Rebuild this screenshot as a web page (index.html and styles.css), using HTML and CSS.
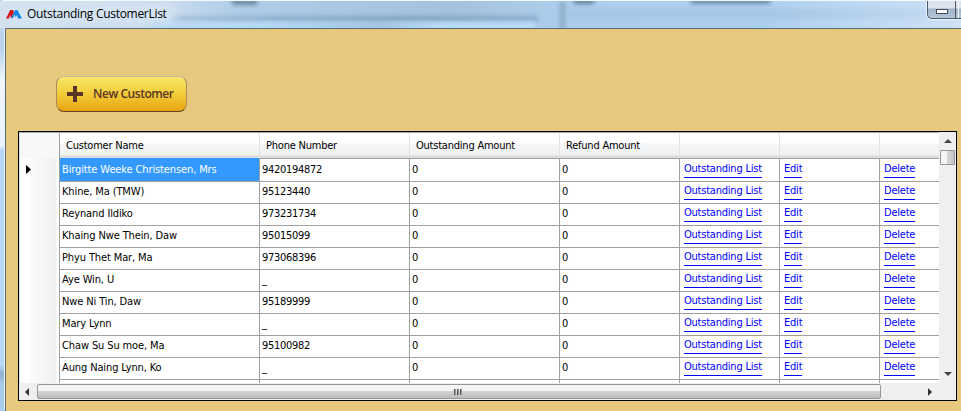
FILE: index.html
```
<!DOCTYPE html>
<html lang="en">
<head>
<meta charset="utf-8">
<title>Outstanding CustomerList</title>
<link rel="stylesheet" href="styles.css">
</head>
<body>
<div class="window">
  <header class="titlebar">
    <div class="glass">
      <i class="g g1"></i><i class="g g2"></i><i class="g g3"></i><i class="g g4"></i><i class="g g5"></i><i class="g g6"></i><i class="g g7"></i><i class="g g8"></i>
    </div>
    <svg class="logo" width="16" height="10" viewBox="0 0 16 10"><path d="M0 9.5 4.2 1H7L8 3.2 5 9.5 4 6 3 9.5z" fill="#d8101c"/><path d="M5 9.5 9 1h2.4L16 9.5h-4L11 6 9.7 8.5 8.8 5.5 7 9z" fill="#1287e8"/></svg>
    <span class="title">Outstanding CustomerList</span>
    <div class="controls"><span class="min"></span></div>
  </header>
  <main class="client">
    <button class="new"><svg width="16" height="16" viewBox="0 0 16 16"><path d="M6 0h4v6h6v4h-6v6H6v-6H0V6h6z" fill="#583525"/></svg><span>New Customer</span></button>
    <section class="gridbox">
      <div class="view">
        <div class="row head"><span class="rh"></span><span>Customer Name</span><span>Phone Number</span><span>Outstanding Amount</span><span>Refund Amount</span><span></span><span></span><span></span></div>
        <div id="rows"></div>
      </div>
      <div class="vbar">
        <svg class="up" width="8" height="4" viewBox="0 0 8 4"><path d="M0 4 4 0l4 4z" fill="#444"/></svg>
        <div class="vthumb"></div>
        <svg class="down" width="8" height="4" viewBox="0 0 8 4"><path d="M0 0h8L4 4z" fill="#444"/></svg>
      </div>
      <div class="hbar">
        <svg class="left" width="4" height="8" viewBox="0 0 4 8"><path d="M4 0v8L0 4z" fill="#333"/></svg>
        <div class="hthumb"><i></i><i></i><i></i></div>
        <svg class="right" width="4" height="8" viewBox="0 0 4 8"><path d="M0 0v8l4-4z" fill="#333"/></svg>
      </div>
      <div class="corner"></div>
    </section>
  </main>
</div>
<script src="rows.js"></script>
</body>
</html>
```
FILE: styles.css
```
* { box-sizing: border-box; }
body { margin: 0; width: 961px; height: 411px; overflow: hidden; font-family: "DejaVu Sans Condensed", "DejaVu Sans", sans-serif; font-stretch: condensed; font-size: 11px; color: #000; }
.window { width: 961px; height: 411px; display: flex; flex-direction: column; background: linear-gradient(#c5d8eb 0, #b9d3ec 50px, #f0f6fc 80px, #e9f2fb 146px, #b5d6f8 150px, #b7d8f8 365px, #8fb1cf 374px, #a9cbea 384px, #a9cbea); }
.titlebar { position: relative; flex: none; height: 28px; display: flex; align-items: flex-start; border-top: 1px solid #f4f9fd; border-radius: 5px 0 0 0; overflow: hidden; background: linear-gradient(90deg, #d4e2f0, #c8dbee 18%, #afcce8 25%, #a4c2dc 47%, #adcdec 58%, #aed0f0 80%, #cfe2f6); }
.glass { position: absolute; inset: 0; }
.g { position: absolute; filter: blur(2px); }
.g1 { left: 170px; top: 15px; width: 368px; height: 5px; background: linear-gradient(90deg, #a3bfda, #8cacc8 30%, #80a0bc 65%, #8babc8); }
.g2 { left: 150px; top: 21px; width: 385px; height: 10px; background: linear-gradient(90deg, #b9d8f6, #b5d8fb 30%, #a3c5e4 60%, #b9dbfc 75%); }
.g3 { left: 232px; top: -3px; width: 25px; height: 7px; background: #718ba1; }
.g4 { left: 560px; top: 0; width: 5px; height: 28px; background: #8aa8c4; }
.g5 { left: 574px; top: -3px; width: 20px; height: 6px; background: #65859e; }
.g6 { left: 691px; top: -3px; width: 79px; height: 6px; background: #6d8ca8; }
.g7 { left: 567px; top: 10px; width: 360px; height: 6px; background: linear-gradient(90deg, #a2c2e1, #a3c2e0 60%, #b9d2ec); filter: blur(3px); }
.g8 { left: 15px; top: 3px; width: 160px; height: 18px; background: #d5e4f2; filter: blur(6px); }
.logo { position: relative; margin: 8px 0 0 6px; }
.title { position: relative; margin: 4px 0 0 5px; font: 12px/17px "Open Sans", sans-serif; letter-spacing: -.29px; white-space: nowrap; }
.controls { position: relative; margin: -1px 0 0 auto; width: 34px; height: 19px; border: 1px solid #4c5967; border-width: 0 0 1px 1px; border-radius: 0 0 0 5px; background: linear-gradient(#dce5ee 0 8px, #a2b4c8 9px, #b4c6d9); box-shadow: 0 0 0 1px #eaf4fd; display: flex; }
.controls::after { content: ""; margin-left: 7px; width: 2px; border-left: 1px solid #4c5967; border-right: 1px solid #eef4fa; }
.min { flex: none; width: 12px; height: 5px; margin: 9px 0 0 8px; background: #fff; border: 1px solid #474d58; }
.client { flex: 1; margin-left: 5px; border-left: 1px solid #5c6b7c; border-top: 1px solid #5c6b7c; box-shadow: -1px -1px 0 #e3f1ff; background: #e6c97d; }
.new { display: flex; align-items: center; width: 131px; height: 36px; margin: 47px 0 0 50px; padding: 0 0 1px 10px; border: 1px solid #74431b; border-color: #c8b69a #a98b61 #684022; border-bottom-width: 1px; border-radius: 8px; background: linear-gradient(#fae768, #f3cf3e 45%, #e8a410); color: #583525; }
.new svg { flex: none; margin-top: 1px; }
.new span { margin-left: 10px; font: 600 12px/18px "Open Sans", sans-serif; letter-spacing: -.45px; white-space: nowrap; }
.gridbox { width: 939px; height: 270px; margin: 19px 0 0 12px; border: 1px solid #000; display: grid; grid-template-columns: 920px 17px; grid-template-rows: 251px 17px; background: #fff; }
.view { overflow: hidden; border-top: 1px solid #a5ab9d; border-left: 1px solid #ddd; }
.row { display: grid; grid-template-columns: 40px 200px 150px 150px 120px 100px 100px 60px; height: 22px; }
.row > span { border-right: 1px solid #a0a0a0; border-bottom: 1px solid #a0a0a0; padding: 0 0 0 2px; line-height: 23px; white-space: nowrap; letter-spacing: -.3px; }
.row > span:nth-child(2) { letter-spacing: -.12px; }
.row > span:last-child { border-right: 0; }
.row .rh { position: relative; padding: 0; background: linear-gradient(90deg, #fff 9px, #fafbfc 10px, #f0f1f3 36px, #fff 37px); border-bottom-color: #e8e9eb; }
.row .sel { background: #3399ff; color: #fff; }
.rh svg { display: block; margin: 7px 0 0 6px; }
.head { height: 25px; background: linear-gradient(#fff 10px, #f5f6f8 11px, #f0f1f3 22px, #ddd 23px); }
.row.head > span { padding-left: 6px; line-height: 25px; border-right-color: #e0e1e3; letter-spacing: -.22px; }
.row.head .rh { background: #f7f8f9; border-color: #a0a0a0; }
.row a { display: inline-block; height: 20px; margin-left: 2px; line-height: 21px; color: #00f; border-bottom: 1px solid #00f; vertical-align: top; letter-spacing: -.22px; }
.vbar { background: #efefef; display: flex; flex-direction: column; align-items: flex-start; padding-left: 1px; }
.up { margin: 7px 0 0 4px; }
.vthumb { width: 15px; height: 15px; margin: 7px 0 auto; border: 1px solid #979797; border-radius: 1px; background: linear-gradient(90deg, #f5f5f5 45%, #d5d5d8 50%, #c5c5c9); }
.down { margin: 0 0 7px 4px; }
.hbar { background: #efefef; display: flex; align-items: center; padding: 0 7px 0 6px; }
.hthumb { width: 844px; height: 15px; margin-left: 8px; padding-right: 3px; display: flex; justify-content: center; align-items: center; gap: 2px; border: 1px solid #979797; border-radius: 2px; background: linear-gradient(#f4f4f4 0 45%, #d3d3d4 50%, #bdbdc0); }
.hthumb i { width: 1px; height: 6px; background: #555; box-shadow: 1px 0 #999; }
.right { margin-left: auto; }
.corner { background: #efefef; }
```
FILE: rows.js
```
const customers = [
  ["Birgitte Weeke Christensen, Mrs", "9420194872"],
  ["Khine, Ma (TMW)", "95123440"],
  ["Reynand Ildiko", "973231734"],
  ["Khaing Nwe Thein, Daw", "95015099"],
  ["Phyu Thet Mar, Ma", "973068396"],
  ["Aye Win, U", "_"],
  ["Nwe Ni Tin, Daw", "95189999"],
  ["Mary Lynn", "_"],
  ["Chaw Su Su moe, Ma", "95100982"],
  ["Aung Naing Lynn, Ko", "_"]
];
const marker = '<svg width="5" height="9" viewBox="0 0 5 9"><path d="M0 0v9l5-4.5z"/></svg>';
document.getElementById("rows").innerHTML = customers.map(([name, phone], i) =>
  `<div class="row"><span class="rh">${i ? "" : marker}</span><span class="${i ? "" : "sel"}">${name}</span><span>${phone}</span><span>0</span><span>0</span><span><a>Outstanding List</a></span><span><a>Edit</a></span><span><a>Delete</a></span></div>`
).join("") + `<div class="row">${'<span class="rh"></span>' + "<span></span>".repeat(7)}</div>`;
```
